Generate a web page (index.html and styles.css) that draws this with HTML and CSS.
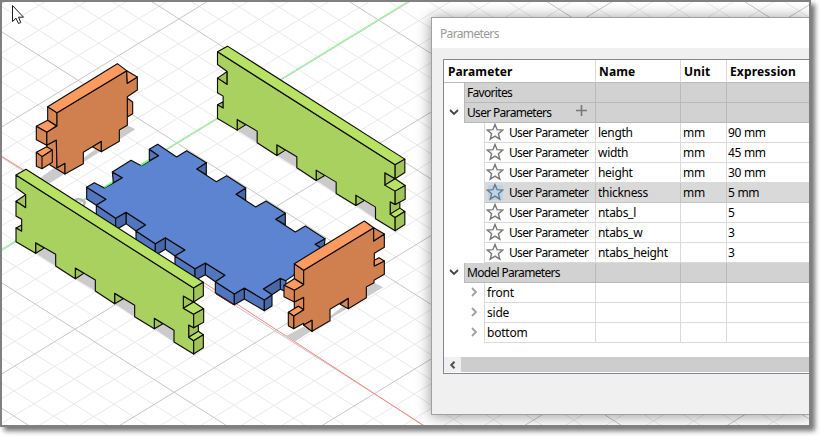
FILE: index.html
```html
<!DOCTYPE html>
<html lang="en">
<head>
<meta charset="utf-8">
<title>Parameters</title>
<link rel="stylesheet" href="styles.css">
</head>
<body>
<main class="frame">
<svg class="canvas" viewBox="2 2 807 423" width="807" height="423">
  <defs>
    <g id="long-panel" class="part green">
      <path class="shade" d="M107 280 167 318V283L137 266ZM226 356 286 393V360L256 342ZM344 431 404 470V436L374 418ZM463 506 522 546V511L492 493Z"/>
      <path class="side" d="M48 124 77 104V143ZM48 204 65 195V214ZM107 248 133 264 107 280ZM226 324 252 340 226 356ZM344 400 370 416 344 431ZM463 475 489 491 463 506ZM550 408 581 426 550 445ZM566 495 581 503 595 495V515L566 532Z"/>
      <path class="face" d="M48 45 581 384V426L550 408V445L581 463V503L566 495V532L581 542V582L522 546V511L463 475V506L404 470V436L344 400V431L286 393V360L226 324V356L167 318V283L107 248V280L48 245V204L65 214V178L48 168V124L77 143V104L48 83Z"/>
      <path class="top" d="M48 45 78 28 610 367 581 384ZM550 445 581 426 611 446 581 463ZM566 532 595 514 610 524 581 542Z"/>
      <path class="side" d="M581 384 610 367V407L581 426ZM581 463 611 446V487L581 503ZM581 542 610 524V563L581 582Z"/>
    </g>
  </defs>
  <rect x="2" y="2" width="807" height="423" fill="#fff"/>
  <g id="grid"></g>
  <path class="axis x" d="M2 156.500 210 286.500 422.500 425"/>
  <path class="axis y" d="M2 249 200 128.500 407 2"/>
  <use href="#long-panel" transform="translate(201.500 36.800) scale(.33333)"/>
  <g transform="scale(.33333)">
    <path class="arc" d="M218 606Q237 589 254 606L249 622"/>
    <g class="part orange">
      <path class="shade" d="M114 541 160 505 195 516 382 376 406 388 300 455 150 549Z"/>
      <path class="side" d="M382 295 398 306V341L382 351ZM277 440 304 424V455ZM143 320 171 338V378L143 361ZM140 436 169 420 171 503 195 490V522L150 495Z"/>
      <path class="face" d="M171 338 380 212 382 250 412 231V270L382 290V376L358 390V424L304 455V424L250 457V491L195 522V490L171 503 169 420 140 436V397L171 378Z"/>
      <path class="top" d="M143 320 352 191 380 212 171 338ZM109 379 143 361 169 378 140 397ZM380 212 412 231 382 250ZM109 457 140 440 157 450 126 470Z"/>
      <path class="side" d="M109 379 140 397V436L109 419ZM109 457 126 470V506L109 499ZM126 470 157 450V487L126 506Z"/>
    </g>
    <g class="part blue">
      <path class="side" d="M260 562 318 598 289 616 260 597ZM289 616 347 655V690L289 650ZM378 637 437 675 408 693 378 671ZM408 693 466 731V766L408 726ZM496 713 555 750 525 768 496 748ZM525 768 585 806V841L525 803ZM616 789 675 826 646 845 616 824ZM646 845 703 882V914L646 878ZM733 864 793 900V932L733 897ZM841 835 858 842V875L841 868ZM448 448 476 467 448 482ZM337 516 367 533 340 549Z"/>
      <path class="dark" d="M347 655 378 637V671L347 690ZM466 731 496 713V748L466 766ZM585 806 616 789V824L585 841ZM703 882 733 864V897L703 914ZM793 900 816 884V918L793 932ZM790 867 841 835V868L816 884ZM619 488 590 507 619 524ZM737 564 708 583 737 601ZM856 640 827 658 856 674ZM975 716 945 733 972 750Z"/>
      <path class="face" d="M260 562 283 548 313 564 340 549 367 533 337 516 393 481 424 497 476 467 448 448 473 433 530 471 560 452 619 488 590 507 649 545 680 527 737 564 708 583 767 621 798 603 856 640 827 658 886 696 916 678 975 716 945 733 975 752V790L900 812 858 842 841 835 790 867 816 884 793 900 733 864 703 882 646 845 675 826 616 789 585 806 525 768 555 750 496 713 466 731 408 693 437 675 378 637 347 655 289 616 318 598Z"/>
    </g>
    <path class="edge-y" d="M313 562 336 548M422 496 446 482"/>
    <path class="edge-x" d="M648 882 700 914"/>
  </g>
  <g transform="translate(0 160) scale(.33333)">
    <use href="#long-panel"/>
  </g>
  <g class="part orange" transform="translate(200 160) scale(.33333)">
    <path class="shade" d="M257 529 310 500 336 510 522 368 550 382 400 470 286 544Z"/>
    <path class="side" d="M283 311 311 331V373L283 356ZM283 426 311 412V449L295 439 283 446ZM420 433 445 415V446ZM311 495 336 481V514Z"/>
    <path class="face" d="M311 331 521 203V243L553 222V262L523 280V318L553 303V343L522 361V368L499 381V413L445 446V415L390 448V482L336 514V481L311 495V490L281 506V468L311 449V412L283 426V391L311 373Z"/>
    <path class="top" d="M283 311 493 183 521 203 311 331ZM252 376 283 356 311 374 283 391ZM265 457 295 439 311 449 281 468ZM523 301 537 293 553 303 523 318Z"/>
    <path class="side" d="M252 376 283 391V426L252 410ZM265 457 281 468V506L265 497ZM521 203 553 222 521 243ZM311 495 336 514V481Z"/>
  </g>
  <path class="pointer" d="M12.500 5.500V21.500L16 18.200 18.500 23.500 20.800 22.500 18.500 17.200H23.500Z"/>
</svg>

<section class="dialog">
  <header class="title">Parameters</header>
  <div class="table">
    <div class="row head"><span class="c1">Parameter</span><span class="c2">Name</span><span class="c3">Unit</span><span class="c4">Expression</span></div>
    <div class="row group"><i class="gutter"></i><span class="c1">Favorites</span><span class="c2"></span><span class="c3"></span><span class="c4"></span></div>
    <div class="row group"><i class="gutter"><svg class="chev" viewBox="0 0 10 10"><path d="M1 3 5 7 9 3"/></svg></i><span class="c1">User Parameters<svg class="plus" viewBox="0 0 11 11"><path d="M5.500 0V11M0 5.500H11"/></svg></span><span class="c2"></span><span class="c3"></span><span class="c4"></span></div>
    <div class="row item"><i class="gutter"></i><span class="c1"><svg class="star" viewBox="0 0 18 18"><path d="M9 1.500 11.100 6.700 16.700 7.100 12.400 10.700 13.800 16.200 9 13.200 4.200 16.200 5.600 10.700 1.300 7.100 6.900 6.700Z"/></svg>User Parameter</span><span class="c2">length</span><span class="c3">mm</span><span class="c4">90 mm</span></div>
    <div class="row item"><i class="gutter"></i><span class="c1"><svg class="star" viewBox="0 0 18 18"><path d="M9 1.500 11.100 6.700 16.700 7.100 12.400 10.700 13.800 16.200 9 13.200 4.200 16.200 5.600 10.700 1.300 7.100 6.900 6.700Z"/></svg>User Parameter</span><span class="c2">width</span><span class="c3">mm</span><span class="c4">45 mm</span></div>
    <div class="row item"><i class="gutter"></i><span class="c1"><svg class="star" viewBox="0 0 18 18"><path d="M9 1.500 11.100 6.700 16.700 7.100 12.400 10.700 13.800 16.200 9 13.200 4.200 16.200 5.600 10.700 1.300 7.100 6.900 6.700Z"/></svg>User Parameter</span><span class="c2">height</span><span class="c3">mm</span><span class="c4">30 mm</span></div>
    <div class="row item selected"><i class="gutter"></i><span class="c1"><svg class="star" viewBox="0 0 18 18"><rect x="2" y="2" width="15" height="15"/><path d="M9 1.500 11.100 6.700 16.700 7.100 12.400 10.700 13.800 16.200 9 13.200 4.200 16.200 5.600 10.700 1.300 7.100 6.900 6.700Z"/></svg>User Parameter</span><span class="c2">thickness</span><span class="c3">mm</span><span class="c4">5 mm</span></div>
    <div class="row item"><i class="gutter"></i><span class="c1"><svg class="star" viewBox="0 0 18 18"><path d="M9 1.500 11.100 6.700 16.700 7.100 12.400 10.700 13.800 16.200 9 13.200 4.200 16.200 5.600 10.700 1.300 7.100 6.900 6.700Z"/></svg>User Parameter</span><span class="c2">ntabs_l</span><span class="c3"></span><span class="c4">5</span></div>
    <div class="row item"><i class="gutter"></i><span class="c1"><svg class="star" viewBox="0 0 18 18"><path d="M9 1.500 11.100 6.700 16.700 7.100 12.400 10.700 13.800 16.200 9 13.200 4.200 16.200 5.600 10.700 1.300 7.100 6.900 6.700Z"/></svg>User Parameter</span><span class="c2">ntabs_w</span><span class="c3"></span><span class="c4">3</span></div>
    <div class="row item"><i class="gutter"></i><span class="c1"><svg class="star" viewBox="0 0 18 18"><path d="M9 1.500 11.100 6.700 16.700 7.100 12.400 10.700 13.800 16.200 9 13.200 4.200 16.200 5.600 10.700 1.300 7.100 6.900 6.700Z"/></svg>User Parameter</span><span class="c2">ntabs_height</span><span class="c3"></span><span class="c4">3</span></div>
    <div class="row group"><i class="gutter"><svg class="chev" viewBox="0 0 10 10"><path d="M1 3 5 7 9 3"/></svg></i><span class="c1">Model Parameters</span><span class="c2"></span><span class="c3"></span><span class="c4"></span></div>
    <div class="row item child"><i class="gutter"><svg class="chev light" viewBox="0 0 10 10"><path d="M3 1 7 5 3 9"/></svg></i><span class="c1">front</span><span class="c2"></span><span class="c3"></span><span class="c4"></span></div>
    <div class="row item child"><i class="gutter"><svg class="chev light" viewBox="0 0 10 10"><path d="M3 1 7 5 3 9"/></svg></i><span class="c1">side</span><span class="c2"></span><span class="c3"></span><span class="c4"></span></div>
    <div class="row item child"><i class="gutter"><svg class="chev light" viewBox="0 0 10 10"><path d="M3 1 7 5 3 9"/></svg></i><span class="c1">bottom</span><span class="c2"></span><span class="c3"></span><span class="c4"></span></div>
    <div class="scroll"><span class="arrow"><svg viewBox="0 0 8 8"><path d="M5.500 .8 2.300 4 5.500 7.200"/></svg></span></div>
  </div>
</section>
</main>
<script src="grid.js"></script>
</body>
</html>
```
FILE: styles.css
```css
* { box-sizing: border-box; }
body { margin: 0; width: 820px; height: 436px; overflow: hidden; background: #fff; font-family: "Noto Sans", "Open Sans", sans-serif; font-size: 12px; color: #000; }
.frame { position: relative; width: 811px; height: 427px; border: 2px solid #808080; overflow: visible; box-shadow: 4px 4px 5px rgba(0,0,0,.55); }
.canvas { display: block; }
.minor, .major { fill: none; stroke-width: 1; }
.minor { stroke: #e9e9e9; }
.major { stroke: #c6c6c6; }
.axis { fill: none; stroke-width: 1; }
.axis.x { stroke: #ff8080; }
.axis.y { stroke: #80ff80; }
.part path { stroke: #0c0c0c; stroke-width: 3.4; stroke-linejoin: round; }
.part .shade { fill: #cbcbcb; stroke: none; }
.green .face { fill: #a9d160; }
.green .top { fill: #b7e263; }
.green .side { fill: #a0c45a; }
.orange .face { fill: #d0804f; }
.orange .top { fill: #ff9a61; }
.orange .side { fill: #d88654; }
.blue .face { fill: #5c84d0; }
.blue .side { fill: #5176bd; }
.blue .dark { fill: #4767a8; }
.arc { fill: none; stroke: #bbb; stroke-width: 8; }
.edge-y { stroke: #5dff6d; stroke-width: 4; }
.edge-x { stroke: #801010; stroke-width: 3; }
.pointer { fill: #fff; stroke: #1b1b2b; stroke-width: 1; }

.dialog { position: absolute; left: 429px; top: 15px; width: 378px; height: 398px; background: #f0f0f0; border: 1px solid #a0a0a0; border-right: 0; clip-path: inset(-15px 0 -10px -20px); box-shadow: 0 1px 14px rgba(0,0,0,.42); }
.title { height: 30px; line-height: 31px; padding-left: 8px; background: #fff; color: #999; letter-spacing: -.65px; }
.table { margin: 11px 0 0 11px; height: 315px; background: #fff; border: 1px solid #828790; border-right: 0; display: flex; flex-direction: column; }
.row { display: flex; height: 20px; line-height: 20px; white-space: nowrap; letter-spacing: -.3px; }
.row > span { border-right: 1px solid #dadada; border-bottom: 1px solid #dadada; padding-left: 2px; overflow: hidden; }
.row > .c1 { flex: 1; display: flex; align-items: center; letter-spacing: -.68px; }
.row > .c2 { width: 85px; }
.row > .c3 { width: 46px; padding-left: 2px; }
.row > .c4 { width: 82px; padding-left: 1px; border-right: 0; }
.row.child > .c1 { letter-spacing: -.2px; }
.row.head { height: 23px; line-height: 23px; font-weight: 700; letter-spacing: .15px; }
.row.head > .c1 { letter-spacing: .1px; }
.head > span { border-bottom-color: #b9b9b9; }
.head > .c1 { align-items: flex-start; }
.row.head > .c1 { padding-left: 4px; }
.row.head > .c2, .row.head > .c3, .row.head > .c4 { padding-left: 3px; }
.gutter { width: 20px; display: flex; align-items: center; justify-content: center; flex: none; padding-right: 1px; }
.item .gutter { width: 40px; justify-content: flex-end; padding-right: 5px; }
.group > span { background: #d2d2d2; border-color: #b9b9b9; }
.group > .c1, .item > .c1 { border-left: 1px solid #dadada; }
.group > .c1 { border-left-color: #b9b9b9; }
.selected > span { background: #d9d9d9; border-color: #c4c4c4; }
.chev { width: 10px; height: 10px; margin-top: -2px; fill: none; stroke: #444; stroke-width: 1.8; }
.chev.light { stroke: #a0a0a0; }
.plus { width: 11px; height: 11px; margin: -4px 0 0 25px; stroke: #777; stroke-width: 1.6; }
.star { width: 18px; height: 18px; flex: none; margin: -2px 5px 0 -1px; fill: none; stroke: #777; stroke-width: 1.4; }
.star rect { fill: #b3d7f3; stroke: none; }
.scroll { margin-top: auto; margin-bottom: 1px; height: 15px; background: #cdcdcd; }
.arrow { display: flex; align-items: center; justify-content: center; width: 17px; height: 15px; background: #f0f0f0; }
.arrow svg { width: 8px; height: 8px; fill: none; stroke: #505050; stroke-width: 2; }
```
FILE: grid.js
```js
// Ground grid: five minor cells per major cell, drawn along both isometric directions.
const grid = document.getElementById('grid');
const down = { slope: 0.635, start: 30.7, step: 25.1 };
const up = { slope: -0.61, start: 128, step: 24.7 };
function draw(kind) {
  let d = '';
  for (const line of [down, up]) {
    for (let i = -30; i < 40; i++) {
      if ((i % 5 === 0) !== (kind === 'major')) continue;
      const y = line.start + i * line.step;
      d += `M0 ${y.toFixed(1)}L810 ${(y + 810 * line.slope).toFixed(1)}`;
    }
  }
  const path = document.createElementNS('http://www.w3.org/2000/svg', 'path');
  path.setAttribute('class', kind);
  path.setAttribute('d', d);
  grid.append(path);
}
draw('minor');
draw('major');
```
